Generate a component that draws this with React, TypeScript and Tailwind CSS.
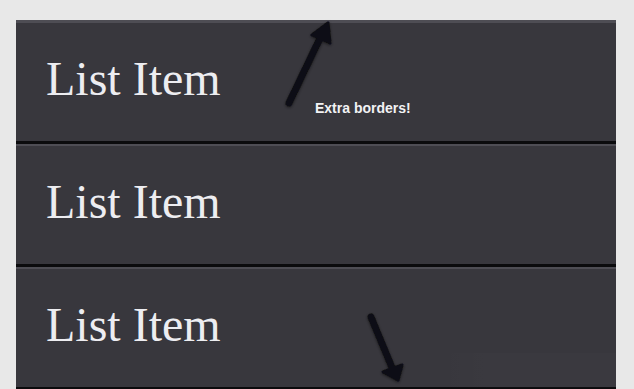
const items = ["List Item", "List Item", "List Item"];

const App = () => {
  return (
    <div className="relative h-[389px] w-full overflow-hidden bg-[#e8e8e8] pl-4 pt-5">
      {/* List */}
      <ul className="w-[600px]">
        {items.map((item, index) => (
          <li
            key={index}
            className={`flex h-[123px] items-center border-b-[3px] border-b-[#0b0b0d] bg-[#38373d] pb-[7px] pl-[30px] ${
              index === 0
                ? "h-[124px] border-t-[3px] border-t-[#4e4d54]"
                : "border-t-2 border-t-[#4e4d54]"
            }`}
          >
            <span className="font-['Liberation_Serif',serif] text-[48px] leading-none text-[#ededf1]">
              {item}
            </span>
          </li>
        ))}
      </ul>

      {/* Annotations */}
      <svg
        className="pointer-events-none absolute left-0 top-0"
        width="634"
        height="389"
        viewBox="0 0 634 389"
      >
        <defs>
          <filter id="soft" x="-50%" y="-50%" width="200%" height="200%">
            <feDropShadow dx="0" dy="1" stdDeviation="1.5" floodColor="#000" floodOpacity="0.5" />
          </filter>
          <linearGradient id="fade" x1="0" y1="0" x2="1" y2="0">
            <stop offset="0" stopColor="#ffffff" stopOpacity="0" />
            <stop offset="0.3" stopColor="#ffffff" stopOpacity="0.012" />
            <stop offset="1" stopColor="#ffffff" stopOpacity="0.012" />
          </linearGradient>
        </defs>
        <rect x="440" y="353" width="176" height="35" fill="url(#fade)" />
        <g filter="url(#soft)" fill="#111113" stroke="#111113" strokeLinecap="round" strokeLinejoin="round">
          <line x1="289" y1="103" x2="322" y2="34" strokeWidth="7" />
          <polygon points="328,23 312,35 330,43" strokeWidth="3" />
          <line x1="371" y1="317" x2="393" y2="370" strokeWidth="7" />
          <polygon points="398,380 383,372 402,365" strokeWidth="3" />
        </g>
        <text
          x="315"
          y="112.5"
          fontFamily="'Liberation Sans', Arial, sans-serif"
          fontSize="14"
          fontWeight="bold"
          fill="#f2f2f4"
        >
          Extra borders!
        </text>
      </svg>
    </div>
  );
};

export default App;
